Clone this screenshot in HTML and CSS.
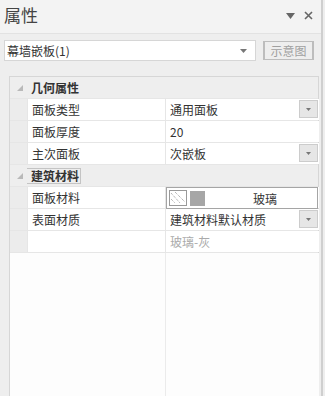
FILE: index.html
```html
<!DOCTYPE html>
<html>
<head>
<meta charset="utf-8">
<link rel="stylesheet" href="styles.css">
</head>
<body>
<div class="panel">
  <div class="titlebar">
    <span class="title">属性</span>
    <span class="tools">
      <svg class="pin" width="9" height="6" viewBox="0 0 9 6"><path d="M0 0H9L4.5 6Z" fill="#666"/></svg>
      <svg class="close" width="9" height="9" viewBox="0 0 9 9"><path d="M1 1L8 8M8 1L1 8" stroke="#666" stroke-width="1.6"/></svg>
    </span>
  </div>
  <div class="toolbar">
    <div class="combo">
      <span class="combo-text">幕墙嵌板(1)</span>
      <svg class="combo-arrow" width="7" height="4" viewBox="0 0 7 4"><path d="M0 0H7L3.5 4Z" fill="#777"/></svg>
    </div>
    <div class="btn">示意图</div>
  </div>
  <div class="grid">
    <div class="row cat">
      <span class="gut"><span class="exp"></span></span>
      <span class="cat-label">几何属性</span>
    </div>
    <div class="row">
      <span class="gut"></span>
      <span class="lab">面板类型</span>
      <span class="val">通用面板<span class="dd"><svg width="7" height="4" viewBox="0 0 7 4"><path d="M0 0H7L3.5 4Z" fill="#777"/></svg></span></span>
    </div>
    <div class="row">
      <span class="gut"></span>
      <span class="lab">面板厚度</span>
      <span class="val">20</span>
    </div>
    <div class="row">
      <span class="gut"></span>
      <span class="lab">主次面板</span>
      <span class="val">次嵌板<span class="dd"><svg width="7" height="4" viewBox="0 0 7 4"><path d="M0 0H7L3.5 4Z" fill="#777"/></svg></span></span>
    </div>
    <div class="row cat">
      <span class="gut"><span class="exp"></span></span>
      <span class="cat-label focus">建筑材料</span>
    </div>
    <div class="row">
      <span class="gut"></span>
      <span class="lab">面板材料</span>
      <span class="val">
        <span class="mat">
          <svg class="hatch" width="18" height="16" viewBox="0 0 18 16">
            <rect x="0.5" y="0.5" width="17" height="15" fill="#fff" stroke="#999"/>
            <path d="M2 3L11 13M6 2L16 12M2 9L6 13" stroke="#9a9a9a" stroke-width="1" stroke-dasharray="1 1"/>
          </svg>
          <span class="swatch"></span>
          <span class="mat-name">玻璃</span>
        </span>
      </span>
    </div>
    <div class="row">
      <span class="gut"></span>
      <span class="lab">表面材质</span>
      <span class="val">建筑材料默认材质<span class="dd"><svg width="7" height="4" viewBox="0 0 7 4"><path d="M0 0H7L3.5 4Z" fill="#777"/></svg></span></span>
    </div>
    <div class="row">
      <span class="gut"></span>
      <span class="lab"></span>
      <span class="val muted">玻璃-灰</span>
    </div>
    <div class="filler">
      <span class="fl"></span>
      <span class="fv"></span>
    </div>
  </div>
</div>
</body>
</html>
```

FILE: styles.css
```css
html, body {
  margin: 0;
  padding: 0;
}
body {
  width: 325px;
  height: 396px;
  overflow: hidden;
  background: #eeeeee;
  font-family: "Noto Sans CJK SC", "Liberation Sans", sans-serif;
  color: #333;
}
.panel {
  width: 321px;
  height: 396px;
  border-right: 2px solid #cfcfcf;
  display: flex;
  flex-direction: column;
  background: #eeeeee;
}
.titlebar {
  height: 33px;
  border-bottom: 1px solid #e2e2e2;
  background: #f3f3f3;
  display: flex;
  align-items: center;
  justify-content: space-between;
  padding: 0 8px 0 4px;
}
.title {
  font-size: 17px;
  color: #444;
  line-height: 20px;
  margin-top: -3px;
}
.tools {
  display: flex;
  align-items: center;
  gap: 9px;
  margin-top: -2px;
}
.toolbar {
  display: flex;
  align-items: center;
  padding: 6px 0 0 4px;
  gap: 7px;
}
.combo {
  width: 250px;
  height: 19px;
  background: #fff;
  border: 1px solid #d6d6d6;
  display: flex;
  align-items: center;
  justify-content: space-between;
  padding: 0 8px 0 2px;
  box-sizing: content-box;
  width: 240px;
}
.combo-text {
  font-size: 12px;
  color: #333;
  line-height: 19px;
}
.btn {
  width: 47px;
  height: 17px;
  border: 1px solid #bdbdbd;
  border-left-width: 2px;
  border-right-width: 2px;
  font-size: 12px;
  color: #a0a0a0;
  line-height: 17px;
  text-align: center;
}
.grid {
  margin: 15px 0 0 9px;
  width: 308px;
  flex: 1;
  border: 1px solid #d6d6d6;
  border-bottom: none;
  display: flex;
  flex-direction: column;
  background: #fff;
}
.row {
  display: grid;
  grid-template-columns: 17px 137px 153px;
  column-gap: 1px;
  height: 21px;
  border-bottom: 1px solid #e6e6e6;
  background: #e6e6e6;
  font-size: 12px;
  line-height: 21px;
}
.gut {
  background: #ececec;
  position: relative;
}
.lab {
  background: #fff;
  padding-left: 4px;
  color: #333;
}
.val {
  background: #fff;
  padding-left: 4px;
  position: relative;
  color: #333;
}
.val.muted {
  color: #aaa;
}
.cat {
  background: #eeeeee;
  grid-template-columns: 17px auto;
  column-gap: 0;
}
.cat .gut {
  background: #eeeeee;
}
.cat-label {
  font-weight: bold;
  padding-left: 4px;
  color: #333;
  align-self: center;
  justify-self: start;
  line-height: 14px;
  border: 1px solid transparent;
  margin-left: -2px;
  padding: 0 1px 0 5px;
}
.cat-label.focus {
  border-color: #c4c4c4;
}
.exp {
  position: absolute;
  left: 7px;
  top: 8px;
  width: 0;
  height: 0;
  border-left: 6px solid transparent;
  border-bottom: 6px solid #b9b9b9;
}
.dd {
  position: absolute;
  right: 1px;
  top: 1px;
  width: 19px;
  height: 18px;
  background: #e6e6e6;
  border: 1px solid #cccccc;
  box-sizing: border-box;
  display: flex;
  align-items: center;
  justify-content: center;
}
.dd svg {
  width: 5px;
  height: 3px;
}
.mat {
  position: absolute;
  left: 0;
  top: 0;
  right: 1px;
  bottom: -1px;
  border: 1px solid #a5a5a5;
  display: flex;
  align-items: center;
  padding-left: 2px;
}
.hatch {
  flex: none;
}
.swatch {
  width: 15px;
  height: 15px;
  background: #a6a6a6;
  margin-left: 3px;
  flex: none;
}
.mat-name {
  flex: 1;
  text-align: center;
  font-size: 12px;
  padding-left: 8px;
}
.filler {
  flex: 1;
  display: grid;
  grid-template-columns: 17px 137px 153px;
  column-gap: 1px;
  background: #ebebeb;
  border-top: 1px solid #e6e6e6;
  margin-top: -1px;
}
.fl, .fv {
  background: #fdfdfd;
}
.fl {
  grid-column: 1 / 3;
  margin-left: 0;
}
.filler .fl {
  grid-column: 1 / 3;
}
```
